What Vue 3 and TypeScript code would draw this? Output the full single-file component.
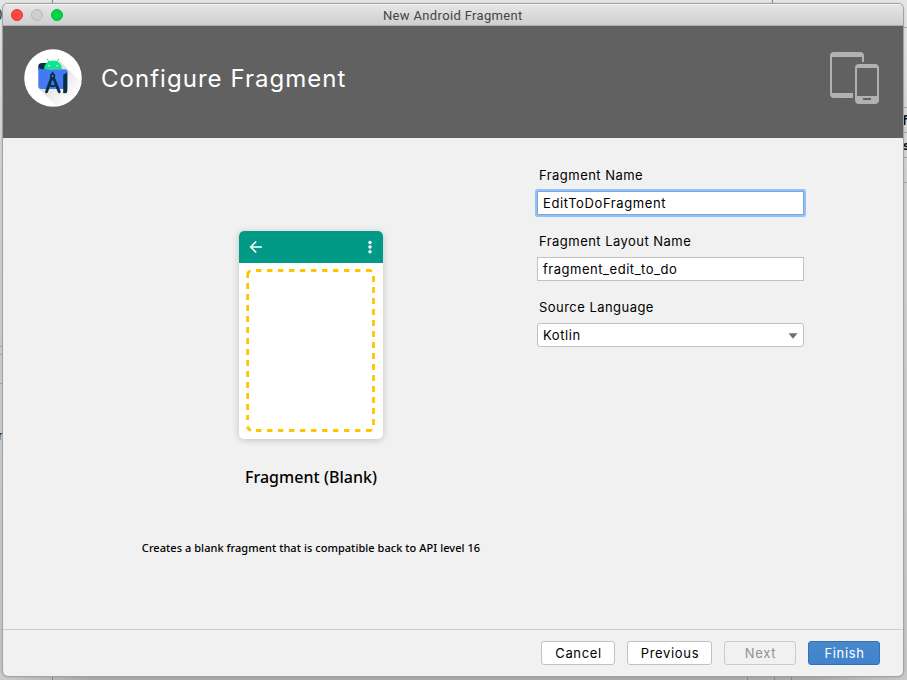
<script setup lang="ts">
import { ref } from 'vue'

const fragmentName = ref('EditToDoFragment')
const layoutName = ref('fragment_edit_to_do')
const language = ref('Kotlin')
</script>

<template>
  <div class="desktop">
    <svg class="backdrop" width="907" height="680" viewBox="0 0 907 680" aria-hidden="true">
      <defs>
        <linearGradient id="side" x1="0" y1="0" x2="0" y2="1">
          <stop offset="0" stop-color="#e6e6e6" />
          <stop offset="0.25" stop-color="#d2d2d2" />
          <stop offset="1" stop-color="#c6c6c6" />
        </linearGradient>
        <linearGradient id="bottom" x1="0" y1="0" x2="1" y2="0">
          <stop offset="0" stop-color="#cbcbcb" />
          <stop offset="0.1" stop-color="#aaaaaa" />
          <stop offset="0.9" stop-color="#aaaaaa" />
          <stop offset="1" stop-color="#c8c8c8" />
        </linearGradient>
      </defs>
      <rect width="907" height="680" fill="url(#side)" />
      <rect width="907" height="4" fill="#e5e5e5" />
      <rect y="674" width="907" height="6" fill="url(#bottom)" />
      <path d="M52.500 0V4M772.500 0V4M52.500 676V680M747.500 676V680M774.500 676V680M791.500 676V680" stroke="#858585" />
      <path d="M0 346.500H3M0 354.500H3M0 383.500H3M903 27.500H907M903 107.500H907M903 132.500H907M903 157.500H907M903 182.500H907" stroke="#a6a6a6" />
      <text class="code" x="-2" y="19">)</text>
      <text class="code" x="-2" y="440">r</text>
      <text class="code strong" x="902" y="125">fa</text>
      <text class="code strong" x="903" y="150">s</text>
    </svg>

    <main class="window">
      <div class="titlebar">
        <div class="lights"><i class="close"></i><i class="minimise"></i><i class="expand"></i></div>
        <span class="caption">New Android Fragment</span>
      </div>
      <header class="header">
        <svg class="logo" width="58" height="58" viewBox="0 0 58 58">
          <defs>
            <clipPath id="disc"><circle cx="29" cy="29" r="28.800" /></clipPath>
            <linearGradient id="shade" x1="0" y1="0" x2="1" y2="1">
              <stop offset="0.3" stop-color="#dddddd" />
              <stop offset="0.8" stop-color="#ffffff" />
            </linearGradient>
          </defs>
          <circle cx="29" cy="29" r="28.800" fill="#fff" />
          <path d="M36 12L58 34V58H34L15 40Z" fill="url(#shade)" clip-path="url(#disc)" />
          <path d="M18 14H23V21H14.300V17.500Q14.300 14 18 14" fill="#073042" />
          <path d="M14.300 18Q15.500 20.200 18 20.200H41Q43.300 20.200 43.300 22.500V40H17Q14.300 40 14.300 37Z" fill="#4479f5" />
          <path d="M20 20.200C20.400 15 24.300 11.600 29 11.600S37.600 15 38 20.200Z" fill="#0ee58c" />
          <path d="M25 13L23.400 10M33.200 13L34.600 10" stroke="#0ee58c" stroke-width="1" stroke-linecap="round" />
          <circle cx="25.100" cy="16.700" r=".8" fill="#fff" /><circle cx="33" cy="16.700" r=".8" fill="#fff" />
          <path d="M28.600 23.800V26" stroke="#073042" stroke-width="2" stroke-linecap="round" />
          <path d="M27.600 29L22.500 42.800M29.600 29L35.200 42.800" stroke="#073042" stroke-width="2.900" stroke-linecap="round" />
          <path d="M24.800 35.500Q28.600 39 32.700 35.500" fill="none" stroke="#073042" stroke-width="1.800" />
          <circle cx="28.600" cy="27" r="1.900" fill="#4479f5" stroke="#073042" stroke-width="1.600" />
          <path d="M39.200 26Q39.400 25 40.800 25Q43.300 24.500 43.300 21V42Q43.300 44.300 41.300 44.300H39.200Z" fill="#073042" />
        </svg>
        <h1>Configure Fragment</h1>
        <svg class="devices" width="50" height="53" viewBox="0 0 50 53">
          <path fill-rule="evenodd" fill="#afb1b3" d="M4 0H30Q34 0 34 4V10H32V5H2V41H23V46H4Q0 46 0 42V4Q0 0 4 0M29 12H45Q49 12 49 16V48Q49 52 45 52H29Q25 52 25 48V16Q25 12 29 12M27 16V44H47V16ZM33 46V48H41V46Z" />
        </svg>
      </header>

      <div class="content">
        <section class="preview">
          <svg class="phone" width="144" height="208" viewBox="0 0 144 208">
            <path d="M0 32H144V203Q144 208 139 208H5Q0 208 0 203Z" fill="#fff" />
            <path d="M5 0H139Q144 0 144 5V32H0V5Q0 0 5 0" fill="#009a87" />
            <path d="M23 16H12M17.200 10.500L11.700 16L17.200 21.500" fill="none" stroke="#fff" stroke-width="1.600" />
            <circle cx="131" cy="11.500" r="1.700" fill="#fff" /><circle cx="131" cy="16" r="1.700" fill="#fff" /><circle cx="131" cy="20.700" r="1.700" fill="#fff" />
            <g fill="none" stroke="#ffc400" stroke-width="2.800">
              <path d="M17 39.500H133" stroke-dasharray="5.400 5.600" />
              <path d="M17 199.500H133" stroke-dasharray="5.400 5.600" />
              <path d="M8.600 52V189" stroke-dasharray="6 5" />
              <path d="M134.500 45V195" stroke-dasharray="6 5" />
              <path d="M8.600 47V44.500Q8.600 41 11.500 39.700M8.600 195.500Q9 198.500 12 199.300" />
              <path d="M131.500 39.600L133.200 40.500M131.500 199.400L133.200 198.500" stroke-width="2" />
            </g>
          </svg>
          <h2>Fragment (Blank)</h2>
          <p>Creates a blank fragment that is compatible back to API level 16</p>
        </section>
        <form class="fields" @submit.prevent>
          <label>Fragment Name</label>
          <div class="field focused">{{ fragmentName }}</div>
          <label>Fragment Layout Name</label>
          <div class="field">{{ layoutName }}</div>
          <label>Source Language</label>
          <div class="field select">{{ language }}
            <svg width="10" height="6" viewBox="0 0 10 6"><path d="M.5 .3H9.500L5 5.800Z" fill="#6e6e6e" /></svg>
          </div>
        </form>
      </div>

      <footer>
        <button class="cancel">Cancel</button>
        <button class="previous">Previous</button>
        <button class="next" disabled>Next</button>
        <button class="finish">Finish</button>
      </footer>
    </main>
  </div>
</template>

<style>
body { margin: 0; overflow: hidden; }
</style>

<style scoped>
* { box-sizing: border-box; }
.desktop { position: relative; width: 907px; height: 680px; padding: 4px 4px 4px 3px; overflow: hidden; font-family: Inter, "Liberation Sans", sans-serif; color: #000; }
.backdrop { position: absolute; left: 0; top: 0; }
.code { font: 12px "DejaVu Sans", sans-serif; fill: #111; }
.strong { font-weight: 700; }
.window { position: relative; display: flex; flex-direction: column; width: 900px; height: 672px; overflow: hidden; background: #f1f1f1; border-radius: 5px; box-shadow: 0 0 0 1px #a2a2a2, 0 0 3px #0005; }
.titlebar { display: flex; align-items: center; height: 22px; background: linear-gradient(#e6e6e6, #cfcfcf); border-bottom: 1px solid #adadad; box-shadow: inset 0 1px #f5f5f5; }
.lights { display: flex; gap: 8px; width: 380px; padding-left: 8px; }
.lights i { width: 12px; height: 12px; border: 1px solid; border-radius: 50%; }
.close { background: #ff4545; border-color: #e03535 !important; }
.minimise { background: #cecece; border-color: #b8b8b8 !important; }
.expand { background: #00d548; border-color: #00bd38 !important; }
.caption { font: 13px/20px Roboto, sans-serif; letter-spacing: .34px; color: #444; white-space: nowrap; padding-top: 3px; }
.header { display: flex; height: 112px; padding: 23px 23px 0 21px; background: #616161; }
h1 { margin: 15px 0 0 19px; flex: 1; font-size: 24px; line-height: 30px; font-weight: 400; letter-spacing: 1.03px; color: #fff; white-space: nowrap; }
.devices { margin-top: 3px; }
.content { display: flex; height: 491px; }
.preview { display: flex; flex-direction: column; align-items: center; width: 534px; padding: 93px 0 0 82px; }
.phone { border-radius: 5px; box-shadow: 0 1px 7px #0003; }
h2 { margin: 26px 0 0; font: 500 16px/24px "Noto Sans", sans-serif; letter-spacing: .04px; white-space: nowrap; }
p { margin: 50px 0 0; font: 500 11px/18px "Noto Sans", sans-serif; letter-spacing: .05px; white-space: nowrap; }
.fields { display: flex; flex-direction: column; width: 267px; padding-top: 27px; }
label { height: 20px; margin: 0 0 6px 2px; font-size: 13px; line-height: 20px; letter-spacing: .46px; white-space: nowrap; }
.field { display: flex; align-items: center; justify-content: space-between; height: 24px; margin-bottom: 16px; padding: 0 5px; background: #fff; border: 1px solid #c2c2c2; font-size: 13px; letter-spacing: .53px; }
.focused { border-color: #7ba7d8; box-shadow: 0 0 0 2px #91c1f7; border-radius: 1px; letter-spacing: .6px; }
.select { border-radius: 3px; letter-spacing: .6px; }
.select svg { margin-top: 1px; }
footer { display: flex; justify-content: flex-end; gap: 12px; height: 47px; padding: 11px 23px 0 0; border-top: 1px solid #cdcdcd; }
button { height: 24px; padding: 0 0 0 1px; font: 13px/20px Inter, sans-serif; letter-spacing: .65px; color: #000; background: #fff; border: 1px solid #c2c2c2; border-radius: 3px; }
.cancel { width: 74px; }
.previous { width: 85px; }
.next { width: 72px; background: #f1f1f1; color: #929292; border-color: #cbcbcb; }
.finish { width: 72px; color: #fff; background: linear-gradient(#4789cc, #4083cb); border-color: #3370b5; }
</style>
